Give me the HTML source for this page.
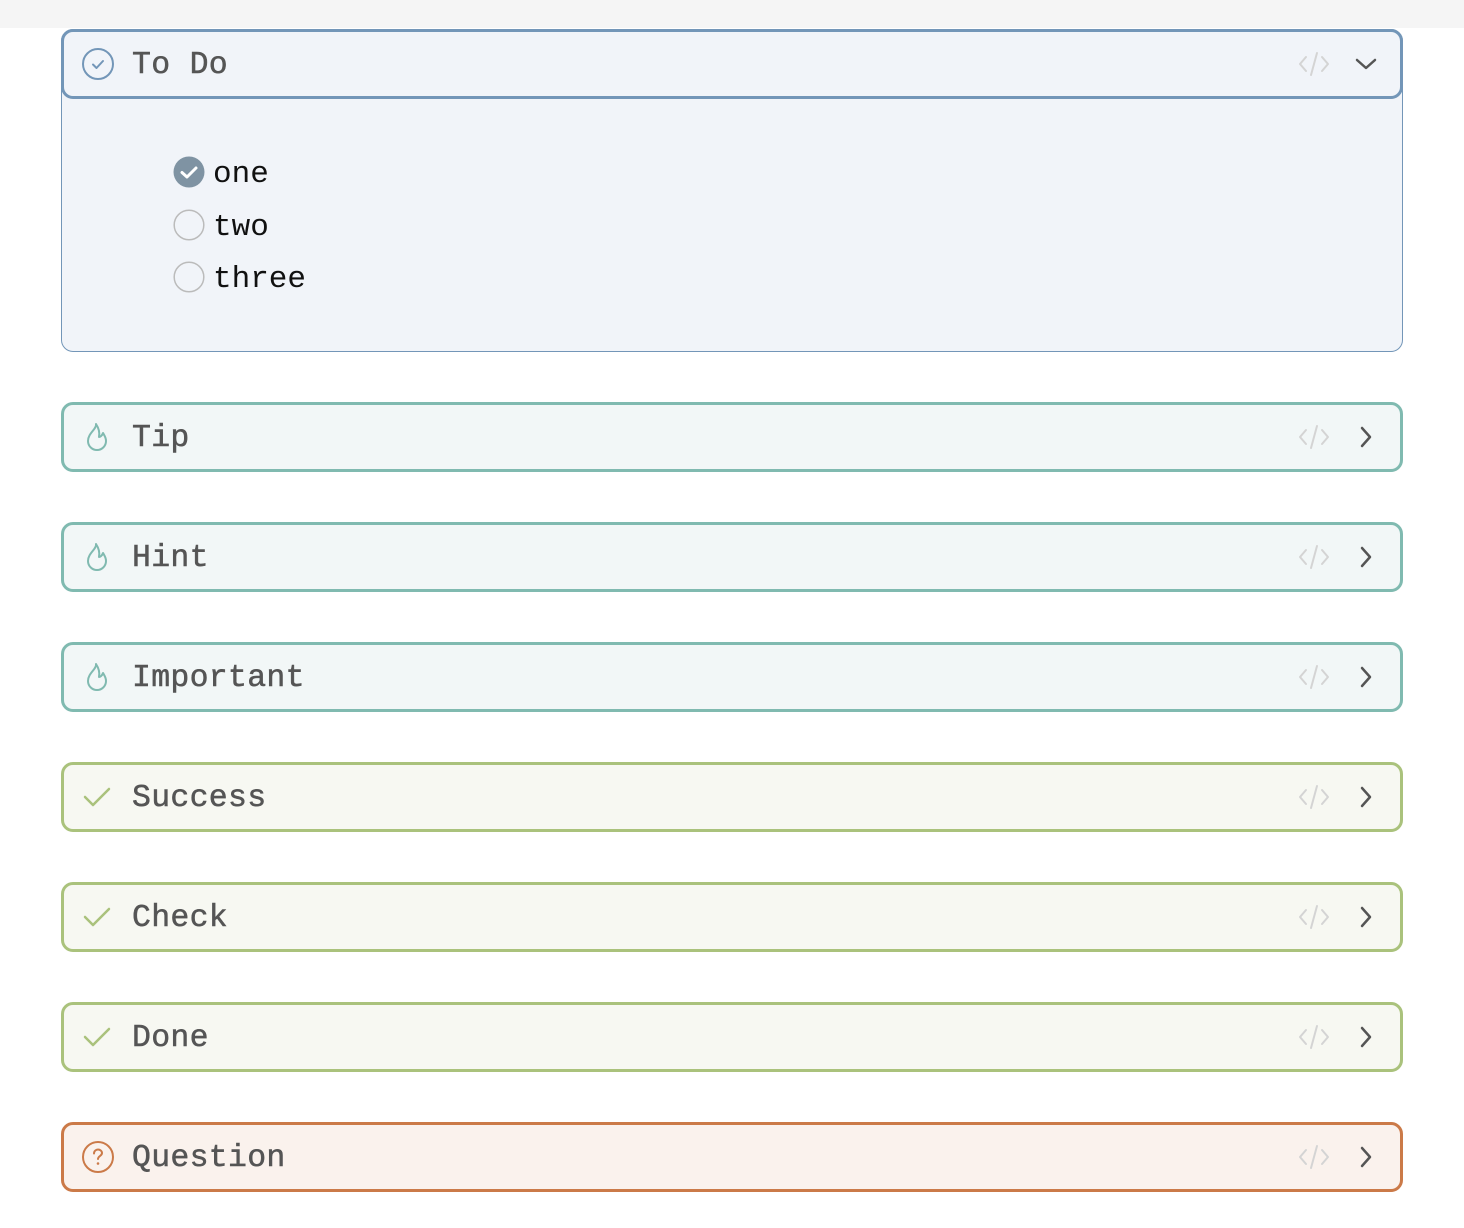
<!DOCTYPE html>
<html><head><meta charset="utf-8">
<style>
*{box-sizing:border-box;margin:0;padding:0}
body{width:1464px;height:1228px;background:#fff;font-family:"Liberation Mono","DejaVu Sans Mono",monospace;position:relative;overflow:hidden}
.top{position:absolute;left:0;top:0;width:1464px;height:28px;background:#f5f5f5}
.box{position:absolute;left:61px;width:1342px}
.hd{height:70px;border:3px solid;border-radius:12px;position:relative}
.hd .ic{position:absolute;left:17px;top:15px}
.hd .t{position:absolute;left:68px;top:16px;font-size:31.5px;color:#555;line-height:36px;font-weight:normal;-webkit-text-stroke:0.5px #555;letter-spacing:0.3px}
.hd .code{position:absolute;left:1233px;top:18px}
.hd .chev{position:absolute;left:1287px;top:18px}
.todo{top:29px}
.todo .hd{border-color:#7396b8;background:#f1f4f9;position:relative;z-index:2}
.todo .bd{position:absolute;top:0;left:0;width:1342px;height:323px;border:1.5px solid #7396b8;border-radius:12px;background:#f1f4f9}
.item{position:absolute;left:112px;font-size:31px;color:#111;line-height:36px}
.item .c{position:absolute;left:0;top:-1px}
.item span{position:absolute;left:40px;top:0;white-space:nowrap}
.tip .hd{border-color:#80bab0;background:#f2f7f7}
.suc .hd{border-color:#aac27c;background:#f7f8f2}
.q .hd{border-color:#cb7a48;background:#faf2ed}
</style></head><body>
<div class="top"></div>

<div class="box todo">
  <div class="bd"></div>
  <div class="hd">
    <svg class="ic" width="34" height="34" viewBox="0 0 34 34"><circle cx="17" cy="17" r="15" fill="none" stroke="#7396b8" stroke-width="2"/><path d="M12 17.5l3.5 3.5 6.5-7" fill="none" stroke="#7396b8" stroke-width="2" stroke-linecap="round" stroke-linejoin="round"/></svg>
    <div class="t">To Do</div>
    <svg class="code" width="34" height="28" viewBox="0 0 34 28"><path d="M9 7L3 14l6 7M25 7l6 7-6 7M20 3l-6 22" fill="none" stroke="#d4d4d4" stroke-width="2" stroke-linecap="round" stroke-linejoin="round"/></svg>
    <svg class="chev" width="30" height="28" viewBox="0 0 30 28"><path d="M6 10l9 8 9-8" fill="none" stroke="#555" stroke-width="2.5" stroke-linecap="round" stroke-linejoin="round"/></svg>
  </div>
  <div class="item" style="top:128px"><svg class="c" width="32" height="32" viewBox="0 0 32 32"><circle cx="16" cy="16" r="15.5" fill="#7f93a3"/><path d="M9 16.5l5 4.5 9-9" fill="none" stroke="#fff" stroke-width="3" stroke-linecap="round" stroke-linejoin="round"/></svg><span>one</span></div>
  <div class="item" style="top:181px"><svg class="c" width="32" height="32" viewBox="0 0 32 32"><circle cx="16" cy="16" r="14.8" fill="none" stroke="#bbb" stroke-width="1.5"/></svg><span>two</span></div>
  <div class="item" style="top:233px"><svg class="c" width="32" height="32" viewBox="0 0 32 32"><circle cx="16" cy="16" r="14.8" fill="none" stroke="#bbb" stroke-width="1.5"/></svg><span>three</span></div>
</div>

<div class="box tip" style="top:402px"><div class="hd">
  <svg class="ic" width="34" height="34" viewBox="0 0 34 34"><path d="M15 4c1 5-8 9-8 17 0 5 4 9 9 9s9-4 9-9c0-4-2-6-3-8-1 3-3 4-4 4 1-5-1-10-3-13z" fill="none" stroke="#80bab0" stroke-width="2" stroke-linejoin="round"/></svg>
  <div class="t">Tip</div>
  <svg class="code" width="34" height="28" viewBox="0 0 34 28"><path d="M9 7L3 14l6 7M25 7l6 7-6 7M20 3l-6 22" fill="none" stroke="#d4d4d4" stroke-width="2" stroke-linecap="round" stroke-linejoin="round"/></svg>
  <svg class="chev" width="30" height="28" viewBox="0 0 30 28"><path d="M11 5l8 9-8 9" fill="none" stroke="#555" stroke-width="2.5" stroke-linecap="round" stroke-linejoin="round"/></svg>
</div></div>

<div class="box tip" style="top:522px"><div class="hd">
  <svg class="ic" width="34" height="34" viewBox="0 0 34 34"><path d="M15 4c1 5-8 9-8 17 0 5 4 9 9 9s9-4 9-9c0-4-2-6-3-8-1 3-3 4-4 4 1-5-1-10-3-13z" fill="none" stroke="#80bab0" stroke-width="2" stroke-linejoin="round"/></svg>
  <div class="t">Hint</div>
  <svg class="code" width="34" height="28" viewBox="0 0 34 28"><path d="M9 7L3 14l6 7M25 7l6 7-6 7M20 3l-6 22" fill="none" stroke="#d4d4d4" stroke-width="2" stroke-linecap="round" stroke-linejoin="round"/></svg>
  <svg class="chev" width="30" height="28" viewBox="0 0 30 28"><path d="M11 5l8 9-8 9" fill="none" stroke="#555" stroke-width="2.5" stroke-linecap="round" stroke-linejoin="round"/></svg>
</div></div>

<div class="box tip" style="top:642px"><div class="hd">
  <svg class="ic" width="34" height="34" viewBox="0 0 34 34"><path d="M15 4c1 5-8 9-8 17 0 5 4 9 9 9s9-4 9-9c0-4-2-6-3-8-1 3-3 4-4 4 1-5-1-10-3-13z" fill="none" stroke="#80bab0" stroke-width="2" stroke-linejoin="round"/></svg>
  <div class="t">Important</div>
  <svg class="code" width="34" height="28" viewBox="0 0 34 28"><path d="M9 7L3 14l6 7M25 7l6 7-6 7M20 3l-6 22" fill="none" stroke="#d4d4d4" stroke-width="2" stroke-linecap="round" stroke-linejoin="round"/></svg>
  <svg class="chev" width="30" height="28" viewBox="0 0 30 28"><path d="M11 5l8 9-8 9" fill="none" stroke="#555" stroke-width="2.5" stroke-linecap="round" stroke-linejoin="round"/></svg>
</div></div>

<div class="box suc" style="top:762px"><div class="hd">
  <svg class="ic" width="34" height="34" viewBox="0 0 34 34"><path d="M4 17l8 8L28 9" fill="none" stroke="#aac27c" stroke-width="2.5" stroke-linecap="round" stroke-linejoin="round"/></svg>
  <div class="t">Success</div>
  <svg class="code" width="34" height="28" viewBox="0 0 34 28"><path d="M9 7L3 14l6 7M25 7l6 7-6 7M20 3l-6 22" fill="none" stroke="#d4d4d4" stroke-width="2" stroke-linecap="round" stroke-linejoin="round"/></svg>
  <svg class="chev" width="30" height="28" viewBox="0 0 30 28"><path d="M11 5l8 9-8 9" fill="none" stroke="#555" stroke-width="2.5" stroke-linecap="round" stroke-linejoin="round"/></svg>
</div></div>

<div class="box suc" style="top:882px"><div class="hd">
  <svg class="ic" width="34" height="34" viewBox="0 0 34 34"><path d="M4 17l8 8L28 9" fill="none" stroke="#aac27c" stroke-width="2.5" stroke-linecap="round" stroke-linejoin="round"/></svg>
  <div class="t">Check</div>
  <svg class="code" width="34" height="28" viewBox="0 0 34 28"><path d="M9 7L3 14l6 7M25 7l6 7-6 7M20 3l-6 22" fill="none" stroke="#d4d4d4" stroke-width="2" stroke-linecap="round" stroke-linejoin="round"/></svg>
  <svg class="chev" width="30" height="28" viewBox="0 0 30 28"><path d="M11 5l8 9-8 9" fill="none" stroke="#555" stroke-width="2.5" stroke-linecap="round" stroke-linejoin="round"/></svg>
</div></div>

<div class="box suc" style="top:1002px"><div class="hd">
  <svg class="ic" width="34" height="34" viewBox="0 0 34 34"><path d="M4 17l8 8L28 9" fill="none" stroke="#aac27c" stroke-width="2.5" stroke-linecap="round" stroke-linejoin="round"/></svg>
  <div class="t">Done</div>
  <svg class="code" width="34" height="28" viewBox="0 0 34 28"><path d="M9 7L3 14l6 7M25 7l6 7-6 7M20 3l-6 22" fill="none" stroke="#d4d4d4" stroke-width="2" stroke-linecap="round" stroke-linejoin="round"/></svg>
  <svg class="chev" width="30" height="28" viewBox="0 0 30 28"><path d="M11 5l8 9-8 9" fill="none" stroke="#555" stroke-width="2.5" stroke-linecap="round" stroke-linejoin="round"/></svg>
</div></div>

<div class="box q" style="top:1122px"><div class="hd">
  <svg class="ic" width="34" height="34" viewBox="0 0 34 34"><circle cx="17" cy="17" r="15" fill="none" stroke="#cb7a48" stroke-width="2"/><path d="M13 13.5c0-2.5 2-4 4-4s4 1.5 4 3.5c0 3-4 3-4 6" fill="none" stroke="#cb7a48" stroke-width="2" stroke-linecap="round"/><circle cx="17" cy="23.5" r="1.3" fill="#cb7a48"/></svg>
  <div class="t">Question</div>
  <svg class="code" width="34" height="28" viewBox="0 0 34 28"><path d="M9 7L3 14l6 7M25 7l6 7-6 7M20 3l-6 22" fill="none" stroke="#d4d4d4" stroke-width="2" stroke-linecap="round" stroke-linejoin="round"/></svg>
  <svg class="chev" width="30" height="28" viewBox="0 0 30 28"><path d="M11 5l8 9-8 9" fill="none" stroke="#555" stroke-width="2.5" stroke-linecap="round" stroke-linejoin="round"/></svg>
</div></div>
</body></html>
